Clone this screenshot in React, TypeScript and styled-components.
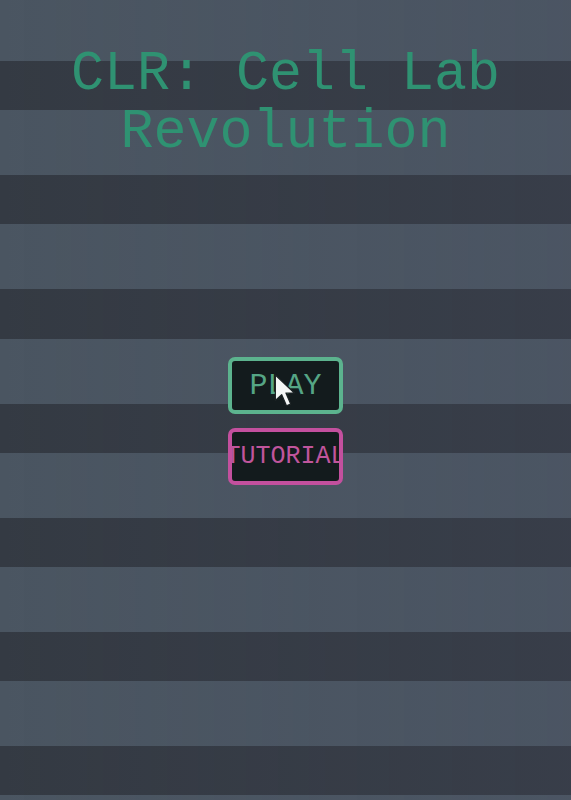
import React from 'react';
import styled, { createGlobalStyle } from 'styled-components';

const GlobalStyle = createGlobalStyle`
  html, body {
    margin: 0;
    padding: 0;
    background: #343a43;
  }
`;

const Screen = styled.div`
  min-height: 800px;
  display: flex;
  flex-direction: column;
  align-items: center;
  background:
    linear-gradient(90deg, rgba(74, 85, 97, 0) 0%, rgba(80, 84, 110, 0.14) 100%),
    repeating-linear-gradient(
      180deg,
      #4a5561 0px,
      #4a5561 65px,
      #343a43 65px,
      #343a43 114.2px
    );
  background-position: 0 -4px;
  font-family: 'Liberation Mono', 'Courier New', monospace;
`;

const Title = styled.h1`
  margin: 46px 0 0;
  font-size: 55px;
  font-weight: 400;
  line-height: 58px;
  text-align: center;
  color: #2f9272;
`;

const Menu = styled.div`
  display: flex;
  flex-direction: column;
  align-items: center;
  gap: 14px;
  margin-top: 195px;
`;

const ButtonWrap = styled.div`
  position: relative;
`;

const MenuButton = styled.button<{ $accent: string; $text: string; $size: number }>`
  box-sizing: border-box;
  width: 115px;
  height: 57px;
  padding: 0;
  overflow: hidden;
  display: flex;
  align-items: center;
  justify-content: center;
  white-space: nowrap;
  background: #131b1d;
  border: 4px solid ${(p) => p.$accent};
  border-radius: 7px;
  color: ${(p) => p.$text};
  font-family: 'Liberation Mono', 'Courier New', monospace;
  font-size: ${(p) => p.$size}px;
  cursor: pointer;
`;

const Pointer = styled.svg`
  position: absolute;
  left: 46px;
  top: 17px;
  pointer-events: none;
`;

const Cursor = () => (
  <Pointer width="26" height="36" viewBox="0 0 24 34">
    <path
      d="M1 1 L1 25 L7 19.5 L11.5 30 L15.5 28.3 L11 18 L19 18 Z"
      fill="#f4f6f6"
      stroke="#1b2224"
      strokeWidth="1.2"
      strokeLinejoin="round"
    />
  </Pointer>
);

const App: React.FC = () => (
  <Screen>
    <GlobalStyle />
    <Title>
      CLR: Cell Lab
      <br />
      Revolution
    </Title>
    <Menu>
      <ButtonWrap>
        <MenuButton $accent="#5cb38e" $text="#55a585" $size={30}>
          PLAY
        </MenuButton>
        <Cursor />
      </ButtonWrap>
      <MenuButton $accent="#c3509e" $text="#c0559c" $size={25}>
        TUTORIAL
      </MenuButton>
    </Menu>
  </Screen>
);

export default App;
